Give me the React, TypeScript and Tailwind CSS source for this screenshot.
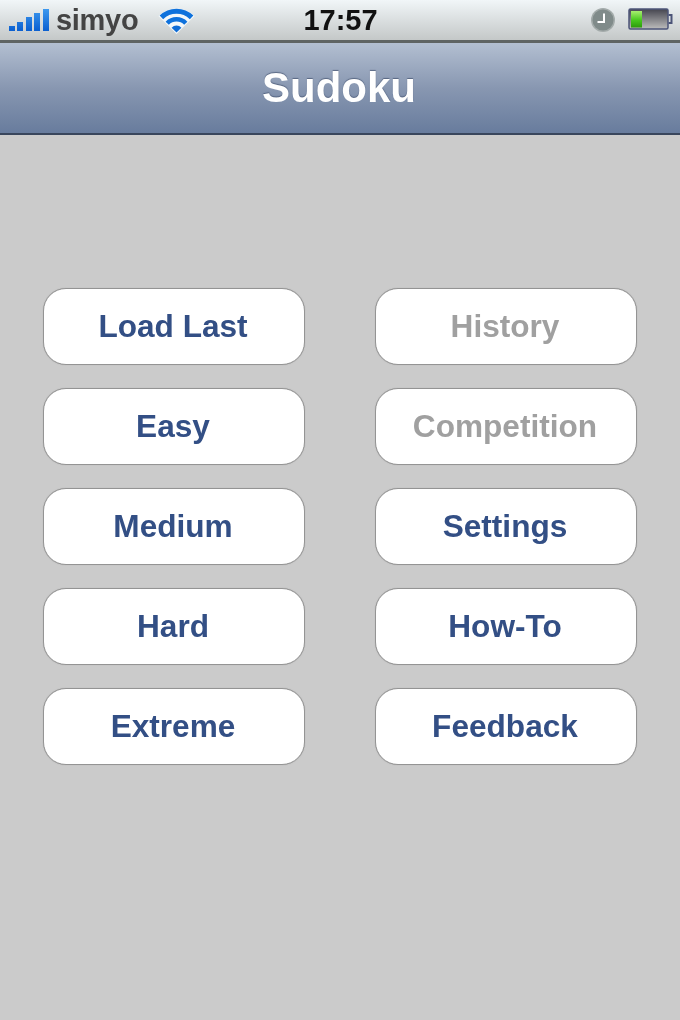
const LEFT_BUTTONS = ['Load Last', 'Easy', 'Medium', 'Hard', 'Extreme'];
const RIGHT_BUTTONS = [
  { label: 'History', disabled: true },
  { label: 'Competition', disabled: true },
  { label: 'Settings', disabled: false },
  { label: 'How-To', disabled: false },
  { label: 'Feedback', disabled: false },
];

function SignalBars() {
  return (
    <svg width="42" height="24" viewBox="0 0 42 24" className="blur-[0.5px]">
      <defs>
        <linearGradient id="signal" gradientUnits="userSpaceOnUse" x1="0" y1="0" x2="0" y2="23">
          <stop offset="0" stopColor="#3f9bf0" />
          <stop offset="1" stopColor="#0a5fd0" />
        </linearGradient>
      </defs>
      <rect x="1" y="18" width="6" height="5" fill="url(#signal)" />
      <rect x="9" y="14" width="6" height="9" fill="url(#signal)" />
      <rect x="18" y="9" width="6" height="14" fill="url(#signal)" />
      <rect x="26" y="5" width="6" height="18" fill="url(#signal)" />
      <rect x="35" y="1" width="6" height="22" fill="url(#signal)" />
    </svg>
  );
}

function WifiIcon() {
  return (
    <svg width="37" height="28" viewBox="0 0 37 28" className="blur-[0.4px]">
      <path d="M18.5 28 L0.5 10 A25.5 25.5 0 0 1 36.5 10 Z" fill="#f4f8fa" />
      <path d="M3.4 11.4 A21.5 21.5 0 0 1 33.6 11.4" fill="none" stroke="#0f72dc" strokeWidth="5" />
      <path d="M9.2 17.2 A13 13 0 0 1 27.8 17.2" fill="none" stroke="#0f72dc" strokeWidth="4.5" />
      <path d="M18.5 26.5 L13.6 21.8 A6.5 6.5 0 0 1 23.4 21.8 Z" fill="#0f6cd6" />
    </svg>
  );
}

function AlarmIcon() {
  return (
    <svg width="26" height="26" viewBox="0 0 26 26" className="blur-[0.4px]">
      <circle cx="13" cy="13" r="12" fill="#a3abaa" />
      <circle cx="13" cy="13" r="10.5" fill="#808b8a" />
      <path d="M14 6.5 V15 H7.5" fill="none" stroke="#ffffff" strokeWidth="2" />
    </svg>
  );
}

function BatteryIcon() {
  return (
    <svg width="46" height="24" viewBox="0 0 46 24" className="blur-[0.4px]">
      <defs>
        <linearGradient id="battery-empty" x1="0" y1="0" x2="0" y2="1">
          <stop offset="0" stopColor="#45454f" />
          <stop offset="1" stopColor="#bdbdbd" />
        </linearGradient>
        <linearGradient id="battery-full" x1="0" y1="0" x2="0" y2="1">
          <stop offset="0" stopColor="#a8ee70" />
          <stop offset="0.55" stopColor="#48c81e" />
          <stop offset="1" stopColor="#2c9a0c" />
        </linearGradient>
      </defs>
      <rect x="2" y="1" width="39" height="20" rx="1.5" fill="url(#battery-empty)" stroke="#4c5478" strokeWidth="1.5" />
      <rect x="4" y="3" width="11" height="16.5" fill="url(#battery-full)" />
      <path d="M41.5 7 H44.5 V15 H41.5" fill="none" stroke="#4c5478" strokeWidth="2" />
    </svg>
  );
}

function StatusBar() {
  return (
    <div className="flex h-[43px] items-center border-b-[3px] border-b-[#5f6463] bg-gradient-to-b from-[#f1f6f8] to-[#c4c8c8] font-['Liberation_Sans',sans-serif]">
      <div className="flex flex-1 items-center pl-[8px]">
        <SignalBars />
        <span className="ml-[6px] text-[29px] leading-none font-bold tracking-[-0.3px] text-[#444444] blur-[0.5px]">simyo</span>
        <span className="ml-[20px]">
          <WifiIcon />
        </span>
      </div>
      <span className="text-[29px] leading-none font-bold text-[#111111] blur-[0.4px]">17:57</span>
      <div className="flex flex-1 items-center justify-end gap-[11px] pr-[7px]">
        <AlarmIcon />
        <BatteryIcon />
      </div>
    </div>
  );
}

function NavBar() {
  return (
    <div className="flex h-[92px] items-center justify-center border-b-2 border-b-[#39465c] bg-gradient-to-b from-[#b3bfd1] via-[#8897b1] via-50% to-[#687c9d] pr-[2px]">
      <h1 className="text-[42px] leading-none font-bold text-white blur-[0.4px] [text-shadow:0_-1px_1px_rgba(50,65,95,0.6)]">Sudoku</h1>
    </div>
  );
}

function MenuButton({ label, disabled = false }: { label: string; disabled?: boolean }) {
  return (
    <button
      className={
        disabled
          ? 'flex h-[77px] w-full items-center justify-center rounded-[23px] border border-[#949494] bg-white pr-[2px] text-[31.6px] font-bold text-[#a0a0a0] shadow-[0_0_1px_0_rgba(150,150,150,0.8)]'
          : 'flex h-[77px] w-full items-center justify-center rounded-[23px] border border-[#949494] bg-white pr-[2px] text-[31.6px] font-bold text-[#334f85] shadow-[0_0_1px_0_rgba(150,150,150,0.8)]'
      }
    >
      <span className="blur-[0.4px]">{label}</span>
    </button>
  );
}

export default function App() {
  return (
    <div className="flex h-[1020px] w-[680px] flex-col overflow-hidden bg-[#cbcbcb] font-['Liberation_Sans',sans-serif]">
      <StatusBar />
      <NavBar />
      <div className="grid grid-cols-2 gap-x-[70px] px-[43px] pt-[153px]">
        <div className="flex flex-col gap-[23px]">
          {LEFT_BUTTONS.map((label) => (
            <MenuButton key={label} label={label} />
          ))}
        </div>
        <div className="flex flex-col gap-[23px]">
          {RIGHT_BUTTONS.map((b) => (
            <MenuButton key={b.label} label={b.label} disabled={b.disabled} />
          ))}
        </div>
      </div>
    </div>
  );
}
